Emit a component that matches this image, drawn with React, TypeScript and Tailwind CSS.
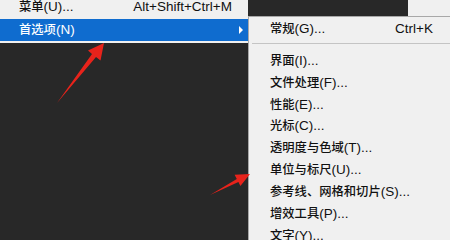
import React from "react";

interface MenuItem {
  zh: string;
  key: string;
  shortcut?: string;
}

const items: MenuItem[] = [
  { zh: "界面", key: "(I)..." },
  { zh: "文件处理", key: "(F)..." },
  { zh: "性能", key: "(E)..." },
  { zh: "光标", key: "(C)..." },
  { zh: "透明度与色域", key: "(T)..." },
  { zh: "单位与标尺", key: "(U)..." },
  { zh: "参考线、网格和切片", key: "(S)..." },
  { zh: "增效工具", key: "(P)..." },
  { zh: "文字", key: "(Y)..." },
];

function Label({ zh, k }: { zh: string; k: string }) {
  return (
    <span className="whitespace-nowrap">
      <span className="text-[12.3px] font-medium font-['Noto_Sans_CJK_SC',sans-serif]">{zh}</span>
      <span>{k}</span>
    </span>
  );
}

function Arrows() {
  return (
    <svg className="absolute inset-0 pointer-events-none" width="450" height="240" viewBox="0 0 450 240">
      <polygon
        fill="#e8231b"
        points="104,43 100.5,60.5 96,57 57,103 92,54 88,50.5"
      />
      <polygon
        fill="#e8231b"
        points="250,174 240.4,186 238.4,182.1 210,195 236.8,178.9 234.6,174.8"
      />
    </svg>
  );
}

export default function App() {
  return (
    <div className="relative w-[450px] h-[240px] overflow-hidden bg-[#282828] text-[13.5px] text-[#111] font-['Liberation_Sans','Noto_Sans_CJK_SC',sans-serif]">
      <div className="flex items-start">
        <div className="w-[248px] bg-[#f0f0f0]">
          <div className="h-[15px] flex items-center justify-between pl-[19px] pr-[16px]">
            <Label zh="菜单" k="(U)..." />
            <span>Alt+Shift+Ctrl+M</span>
          </div>
          <div className="mt-[4px] h-[22px] bg-[#0f6ccf] text-white flex items-center justify-between pl-[19px] pr-[5px]">
            <Label zh="首选项" k="(N)" />
            <span className="w-0 h-0 border-y-[4px] border-y-transparent border-l-[4px] border-l-white" />
          </div>
          <div className="h-[2px]" />
        </div>
        <div className="flex-1" />
        <div className="w-[42px] h-[16px] bg-[#f0f0f0]" />
      </div>

      <div className="absolute left-[248px] top-[16px] right-0 bottom-0 bg-[#f0f0f0] border-l border-t border-[#a8a8a8]">
        <div className="h-[24px] flex items-center justify-between pl-[21px] pr-[17px]">
          <Label zh="常规" k="(G)..." />
          <span>Ctrl+K</span>
        </div>
        <div className="mt-[2px] mb-[6px] ml-[3px] h-px bg-[#c4c4c4]" />
        {items.map((it) => (
          <div key={it.zh} className="h-[21.9px] flex items-center pl-[21px]">
            <Label zh={it.zh} k={it.key} />
          </div>
        ))}
      </div>

      <Arrows />
    </div>
  );
}
